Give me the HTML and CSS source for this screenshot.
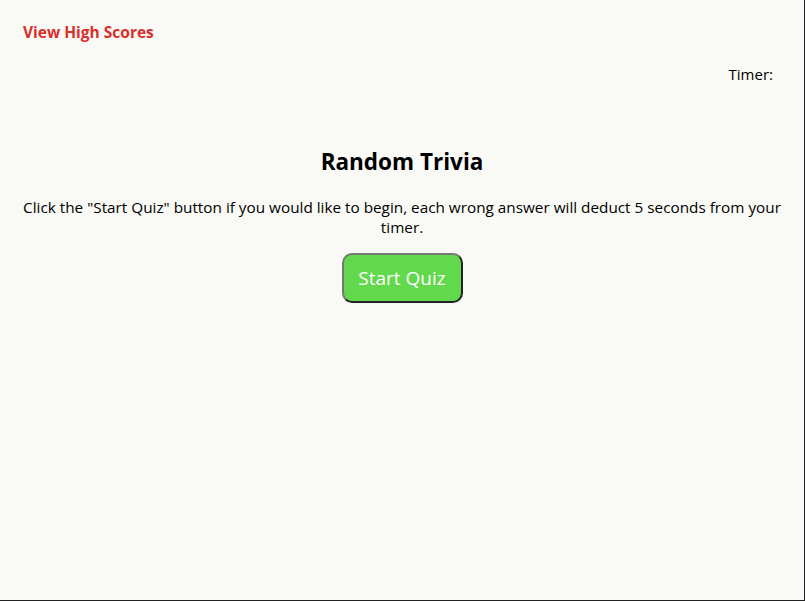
FILE: index.html
```html
<!DOCTYPE html>
<html lang="en">
<head>
<meta charset="utf-8">
<title>Random Trivia</title>
<link rel="stylesheet" href="styles.css">
</head>
<body>
<div class="page">
  <header class="top">
    <a class="scores" href="#">View High Scores</a>
  </header>
  <div class="timer-row">
    <span class="timer">Timer:</span>
  </div>
  <main class="intro">
    <h1 class="title">Random Trivia</h1>
    <p class="desc">Click the "Start Quiz" button if you would like to begin, each wrong answer will deduct 5 seconds from your timer.</p>
    <button class="start" type="button">Start Quiz</button>
  </main>
</div>
</body>
</html>
```
FILE: styles.css
```css
html, body {
  margin: 0;
  padding: 0;
  height: 100%;
}
body {
  background: #f9f9f5;
  font-family: "Open Sans", "Noto Sans", sans-serif;
  color: #000;
}
.page {
  box-sizing: border-box;
  height: 100%;
  border-right: 1px solid #222;
  border-bottom: 1px solid #222;
}
.top {
  padding: 21px 23px 0;
}
.scores {
  color: #d9302a;
  font-weight: 700;
  font-size: 15.5px;
  text-decoration: none;
}
.timer-row {
  display: flex;
  justify-content: flex-end;
  padding: 21px 31px 0;
  font-size: 15px;
}
.intro {
  display: flex;
  flex-direction: column;
  align-items: center;
  text-align: center;
  padding: 0 20px;
}
.title {
  margin: 63px 0 0;
  font-size: 22.5px;
  font-weight: 700;
  line-height: 30px;
}
.desc {
  margin: 20px 0 0;
  font-size: 15.3px;
  line-height: 20px;
}
.start {
  margin-top: 16px;
  width: 121px;
  height: 50px;
  background: #62d84c;
  color: #fff;
  font-family: inherit;
  font-size: 19px;
  border: 2px solid;
  border-color: #777 #222 #222 #777;
  border-radius: 10px;
  cursor: pointer;
}
```
